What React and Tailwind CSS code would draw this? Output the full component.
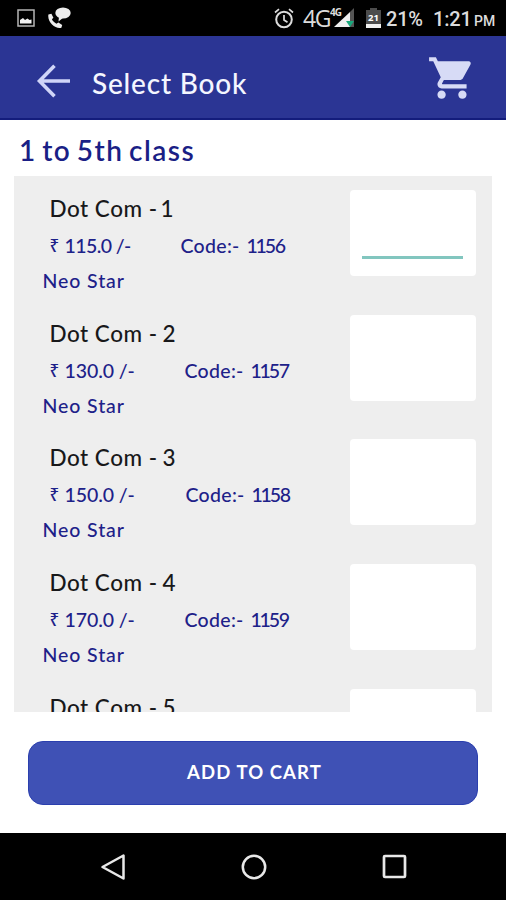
import React from 'react';
import { MdShoppingCart } from 'react-icons/md';

const books = [
    { name: "Dot Com -", no: "1", price: "115.0", code: "1156", codePos: "left-[166px]", active: true },
    { name: "Dot Com -", no: "2", price: "130.0", code: "1157", codePos: "left-[170px]" },
    { name: "Dot Com -", no: "3", price: "150.0", code: "1158", codePos: "left-[171px]" },
    { name: "Dot Com -", no: "4", price: "170.0", code: "1159", codePos: "left-[170px]" },
    { name: "Dot Com -", no: "5", price: "190.0", code: "1160", codePos: "left-[170px]" },
];

const StatusBar = () => (
    <div className="h-9 bg-black flex items-center justify-between pl-[17px] pr-[10px] text-[#dcdcdc] font-['Roboto',sans-serif]">
        <div className="flex items-center gap-[13px]">
            <svg width="18" height="18" viewBox="0 0 18 18">
                <rect x="1" y="1" width="16" height="16" fill="none" stroke="#b5b5b5" strokeWidth="1.5" />
                <path d="M3 14.5V11l3-2 2 2 2.500-1.500 2 1.500 2-.5v4z" fill="#f2f2f2" />
            </svg>
            <svg width="23" height="22" viewBox="0 0 23 22" fill="#ececec">
                <ellipse cx="15" cy="6" rx="7.700" ry="5.500" />
                <path d="M11 9.500l-.5 5 5-4z" />
                <path d="M.4 7.500l3-.8 2 4-1.500 1.600c1 2 2.500 3.500 4.500 4.400l2-1.200 3.800 2.600-.8 2.600C8 22.500-1 15.500.4 7.500z" />
            </svg>
        </div>
        <div className="flex items-center">
            <svg width="20" height="21" viewBox="0 0 20 21" fill="none" stroke="#dcdcdc" strokeWidth="2">
                <circle cx="10" cy="11.500" r="7.800" />
                <path d="M10 7v5l3.500 2.200M1 4.500L5 1.200M19 4.500L15 1.200" strokeWidth="1.700" />
            </svg>
            <span className="ml-[9px] w-[27px] text-[23px] leading-9 tracking-[-1.5px] font-['Open_Sans',sans-serif]">4G</span>
            <svg className="overflow-visible" width="26" height="22" viewBox="0 0 26 22">
                <path d="M24 1v19h-4V5z" fill="#555" />
                <path d="M4 20L20 5v15z" fill="#efefef" />
                <path d="M16 14h8l-4 6z" fill="#19a87c" />
                <text x="0" y="9" fontSize="10" fontWeight="700" fontFamily="Open Sans, sans-serif" fill="#dcdcdc" textLength="12">4G</text>
            </svg>
            <svg className="ml-[10px]" width="15" height="20" viewBox="0 0 15 20">
                <path d="M4 0h7v2h4v18H0V2h4z" fill="#4c4c4c" />
                <path d="M0 16h15v4H0z" fill="#f0f0f0" />
                <text x="2" y="13" fontSize="9.500" fontWeight="700" fontFamily="Open Sans, sans-serif" fill="#fff" textLength="11">21</text>
            </svg>
            <span className="ml-[5px] w-[47px] pt-0.5 text-[20px] leading-9 tracking-[-0.2px]">21%</span>
            <span className="w-[41px] pt-0.5 text-[20px] leading-9 tracking-[-0.2px]">1:21</span>
            <span className="w-[22px] pt-1.5 text-[14px]">PM</span>
        </div>
    </div>
);

const Header = () => (
    <header className="h-[84px] bg-[#2b3594] border-b-2 border-[#131c7c] flex items-center pl-[36px] pr-[33px]">
        <svg width="35" height="34" viewBox="0 0 35 34" className="mt-2" fill="none" stroke="#d0d5f8" strokeWidth="3.600">
            <path d="M18.500 1.800L3.500 17l15 15.200M3 17h31" />
        </svg>
        <h1 className="ml-[21px] mt-[12px] text-[28px] leading-[34px] tracking-[0.8px] text-[#f4f6ff]">Select Book</h1>
        <MdShoppingCart size={50} className="ml-auto -mr-1 mt-0.5 text-[#d7dbf6]" />
    </header>
);

const BookRow = ({ book }) => (
    <div className="h-[124.700px] flex justify-between pl-[28.500px] pr-[16px] pt-[14px]">
        <div className="relative w-[300px] text-[#1d2189] text-[19.500px]">
            <div className="pl-[7px] pt-[5px] h-[38px] text-[22.500px] leading-[28px] text-[#18181a] flex">
                <span className="w-[113px] tracking-[0.5px] whitespace-nowrap">{book.name}</span>
                <span className={book.no === "1" ? "-ml-0.5" : ""}>{book.no}</span>
            </div>
            <div className="relative h-[36px] pl-[7px] pt-[5px] leading-[26px] flex">
                <span className="w-[15px] font-['Noto_Sans',sans-serif] text-[17px]">₹</span>
                <span className={`whitespace-nowrap ${book.active ? "tracking-[-0.6px]" : "tracking-[-0.1px]"}`}>{book.price} /-</span>
                <div className={`absolute -ml-7 flex ${book.codePos}`}>
                    <span className="w-[66px] tracking-[0.3px]">Code:-</span>
                    <span className="tracking-[-2.2px]">{book.code.slice(0, 2)}</span>
                    <span className="tracking-[-1.2px]">{book.code.slice(2)}</span>
                </div>
            </div>
            <div className="pt-1 leading-[26px] tracking-[0.9px]">Neo Star</div>
        </div>
        <div className="w-[126px] h-[86px] rounded-[4px] bg-white flex items-end pl-3 pb-[17px]">
            {book.active && <div className="w-[101px] h-[3px] bg-[#82c6bf]" />}
        </div>
    </div>
);

const NavBar = () => (
    <div className="h-[67px] bg-black flex items-center justify-between pl-[100px] pr-[99px]">
        <svg width="26" height="28" viewBox="0 0 26 28" fill="none" stroke="#e8e8e8" strokeWidth="2.500" strokeLinejoin="round">
            <path d="M23.500 2.500v23L2.500 14z" />
        </svg>
        <svg width="26" height="26" viewBox="0 0 26 26" fill="none" stroke="#e8e8e8" strokeWidth="2.500">
            <circle cx="13" cy="13" r="11.200" />
        </svg>
        <svg width="25" height="25" viewBox="0 0 25 25" fill="none" stroke="#e8e8e8" strokeWidth="2.700">
            <rect x="2" y="2" width="21" height="21" rx="1" />
        </svg>
    </div>
);

const App = () => {
    return (
        <div className="w-[506px] h-[900px] overflow-hidden bg-white flex flex-col font-['Lato',sans-serif] font-medium">
            <StatusBar />
            <Header />
            <h2 className="h-14 pl-[19px] pt-[13px] text-[28px] leading-[34px] font-semibold tracking-[1.5px] [word-spacing:-3px] text-[#1a1f86]">1 to 5th class</h2>
            <div className="mx-[14px] h-[536px] overflow-hidden bg-[#eeeeee]">
                {books.map((book) => (
                    <BookRow key={book.no} book={book} />
                ))}
            </div>
            <div className="flex-1 px-[28px] pt-[29px]">
                <button className="w-full h-[64px] rounded-[15px] border border-[#2b3fae] bg-[#3f51b5] text-white text-[18.500px] font-bold tracking-[1.1px] pl-[3px]">
                    ADD TO CART
                </button>
            </div>
            <NavBar />
        </div>
    );
};

export default App;
